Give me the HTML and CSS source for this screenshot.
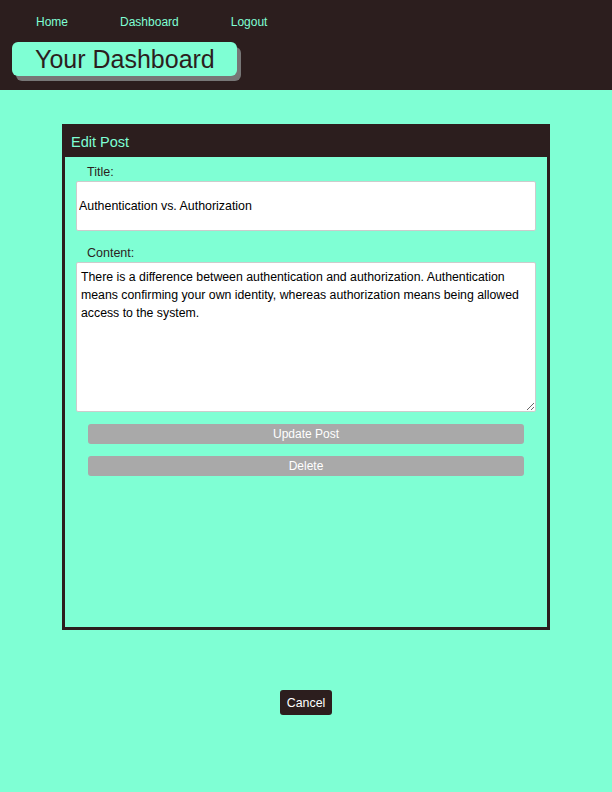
FILE: index.html
```html
<!DOCTYPE html>
<html lang="en">
<head>
    <meta charset="UTF-8">
    <meta name="viewport" content="width=device-width, initial-scale=1.0">
    <title>Your Dashboard</title>
    <link rel="stylesheet" href="styles.css">
</head>
<body>
    <header class="top-bar">
        <nav class="nav">
            <a href="#" class="nav-link">Home</a>
            <a href="#" class="nav-link">Dashboard</a>
            <a href="#" class="nav-link">Logout</a>
        </nav>
        <h1 class="page-title">Your Dashboard</h1>
    </header>

    <main class="content">
        <section class="edit-card">
            <h2 class="edit-card-header">Edit Post</h2>
            <form class="edit-form">
                <label class="form-label" for="post-title">Title:</label>
                <input type="text" id="post-title" class="title-input" value="Authentication vs. Authorization">
                <label class="form-label content-label" for="post-content">Content:</label>
                <textarea id="post-content" class="content-input">There is a difference between authentication and authorization. Authentication means confirming your own identity, whereas authorization means being allowed access to the system.</textarea>
                <button type="button" class="form-button">Update Post</button>
                <button type="button" class="form-button">Delete</button>
            </form>
        </section>
        <button class="cancel-button">Cancel</button>
    </main>
</body>
</html>
```

FILE: styles.css
```css
body {
    margin: 0;
    background: #7fffd4;
    font-family: "Liberation Sans", Arial, sans-serif;
    color: #2c1e1e;
}

.top-bar {
    background: #2c1e1e;
    height: 90px;
    box-sizing: border-box;
    padding-top: 14px;
}

.nav {
    display: flex;
    padding-left: 36px;
}

.nav-link {
    color: #7fffd4;
    text-decoration: none;
    font-size: 12px;
    line-height: 16px;
}

.nav-link:nth-child(1) {
    margin-right: 52px;
}

.nav-link:nth-child(2) {
    margin-right: 52px;
}

.page-title {
    display: inline-block;
    margin: 12px 0 0 12px;
    width: 225px;
    height: 34px;
    box-sizing: border-box;
    padding-left: 23px;
    background: #7fffd4;
    border-radius: 6px;
    box-shadow: 4px 5px 0 #777;
    font-size: 25px;
    font-weight: normal;
    line-height: 34px;
    color: #2c1e1e;
}

.content {
    display: flex;
    flex-direction: column;
    align-items: center;
    padding-top: 34px;
}

.edit-card {
    width: 488px;
    height: 506px;
    box-sizing: border-box;
    border: 3px solid #2c1e1e;
    border-top: none;
}

.edit-card-header {
    margin: 0 -3px;
    height: 33px;
    padding: 0 0 0 9px;
    background: #2c1e1e;
    color: #7fffd4;
    font-size: 14.5px;
    font-weight: normal;
    line-height: 36px;
}

.edit-form {
    display: flex;
    flex-direction: column;
    padding: 0 11px;
}

.form-label {
    font-size: 12.5px;
    line-height: 14px;
    padding-left: 11px;
    margin-top: 8px;
    margin-bottom: 2px;
}

.content-label {
    margin-top: 15px;
}

.title-input {
    height: 50px;
    box-sizing: border-box;
    margin: 0;
    padding: 0 2px;
    border: 1px solid #ccc;
    border-radius: 2px;
    background: white;
    font-family: inherit;
    font-size: 12.4px;
    color: black;
}

.content-input {
    height: 150px;
    box-sizing: border-box;
    margin: 0;
    padding: 5px 4px;
    border: 1px solid #ccc;
    border-radius: 2px;
    background: white;
    font-family: inherit;
    font-size: 12.3px;
    line-height: 18px;
    color: black;
    resize: vertical;
}

.form-button {
    margin: 12px 12px 0;
    height: 20px;
    padding: 0;
    border: none;
    border-radius: 3px;
    background: #a9a9a9;
    color: white;
    font-family: inherit;
    font-size: 12px;
}

.cancel-button {
    margin-top: 60px;
    height: 25px;
    padding: 0 7px;
    border: none;
    border-radius: 3px;
    background: #2c1e1e;
    color: white;
    font-family: inherit;
    font-size: 12.4px;
}
```
